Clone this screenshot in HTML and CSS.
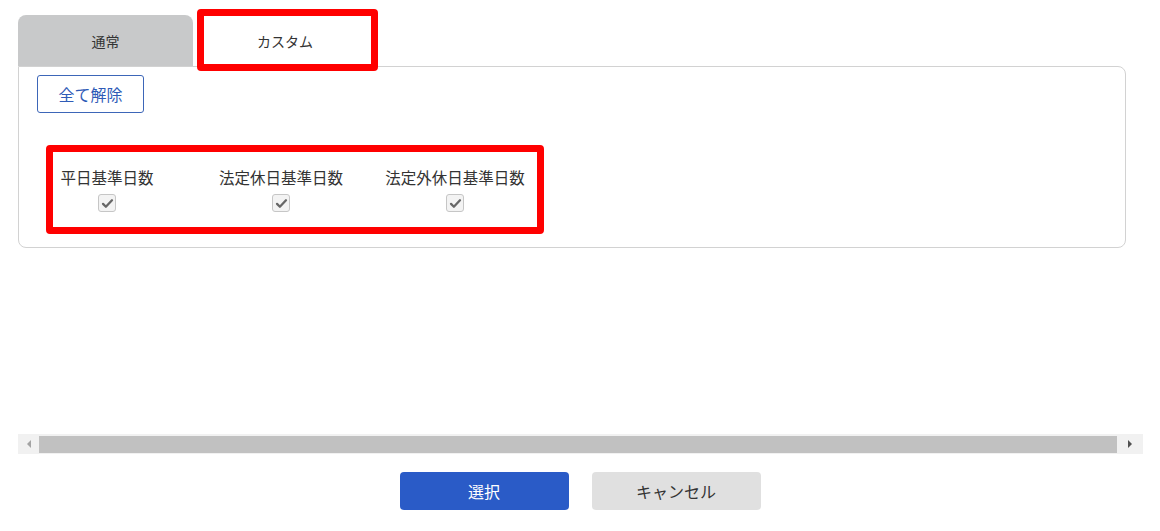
FILE: index.html
```html
<!DOCTYPE html>
<html lang="ja">
<head>
<meta charset="utf-8">
<title>カスタム</title>
<link rel="stylesheet" href="styles.css">
</head>
<body>
<div class="page">
  <div class="tabs">
    <div class="tab tab-normal">通常</div>
    <div class="tab tab-custom">カスタム</div>
    <div class="mark mark-tab"></div>
  </div>
  <div class="panel">
    <button class="btn-clear">全て解除</button>
    <div class="fields">
      <div class="field">
        <span class="label">平日基準日数</span>
        <span class="check"><svg viewBox="0 0 16 16" width="13" height="13"><path d="M2.5 8.5 L6 12 L13.5 4" fill="none" stroke="#676767" stroke-width="2.8" stroke-linecap="round" stroke-linejoin="round"/></svg></span>
      </div>
      <div class="field">
        <span class="label">法定休日基準日数</span>
        <span class="check"><svg viewBox="0 0 16 16" width="13" height="13"><path d="M2.5 8.5 L6 12 L13.5 4" fill="none" stroke="#676767" stroke-width="2.8" stroke-linecap="round" stroke-linejoin="round"/></svg></span>
      </div>
      <div class="field">
        <span class="label">法定外休日基準日数</span>
        <span class="check"><svg viewBox="0 0 16 16" width="13" height="13"><path d="M2.5 8.5 L6 12 L13.5 4" fill="none" stroke="#676767" stroke-width="2.8" stroke-linecap="round" stroke-linejoin="round"/></svg></span>
      </div>
      <div class="mark mark-fields"></div>
    </div>
  </div>
  <div class="hscroll">
    <div class="sb-btn sb-left"><span class="arrow-left"></span></div>
    <div class="sb-thumb"></div>
    <div class="sb-btn sb-right"><span class="arrow-right"></span></div>
  </div>
  <div class="actions">
    <button class="btn btn-primary">選択</button>
    <button class="btn btn-secondary">キャンセル</button>
  </div>
</div>
</body>
</html>
```
FILE: styles.css
```css
* { box-sizing: border-box; }
html, body { margin: 0; padding: 0; background: #fff; }
body {
  font-family: "Noto Sans CJK JP", "Noto Sans", sans-serif;
  color: #333;
  width: 1160px;
  height: 531px;
  overflow: hidden;
}
.page { padding: 15px 0 0 18px; }

.tabs {
  position: relative;
  display: flex;
  height: 51px;
}
.tab {
  height: 51px;
  display: flex;
  align-items: center;
  justify-content: center;
  font-size: 14px;
  color: #333;
  border-radius: 8px 8px 0 0;
}
.tab-normal { width: 175px; background: #c8c9ca; }
.tab-custom { width: 184px; background: #fff; }

.mark {
  position: absolute;
  border: 7px solid #f00;
  border-radius: 4px;
  pointer-events: none;
}
.mark-tab { left: 179px; top: -6px; width: 181px; height: 62px; }

.panel {
  width: 1108px;
  height: 182px;
  border: 1px solid #d2d2d2;
  border-radius: 0 8px 8px 8px;
  padding: 8px 0 0 18px;
}
.btn-clear {
  display: block;
  width: 107px;
  height: 38px;
  background: #fff;
  border: 1px solid #3d66b8;
  border-radius: 3px;
  color: #2f5bb7;
  font-family: inherit;
  font-size: 16px;
  padding: 0;
}
.fields {
  position: relative;
  display: grid;
  grid-template-columns: repeat(3, 174px);
  margin: 53px 0 0 -17px;
}
.field {
  display: flex;
  flex-direction: column;
  align-items: center;
}
.label {
  font-size: 15.5px;
  line-height: 22px;
  color: #333;
}
.check {
  margin-top: 6px;
  width: 18px;
  height: 18px;
  border: 1px solid #c6c6c6;
  border-radius: 3px;
  background: #f3f3f3;
  display: flex;
  align-items: center;
  justify-content: center;
}
.mark-fields { left: 26px; top: -21px; width: 498px; height: 89px; }

.hscroll {
  margin-top: 186px;
  width: 1125px;
  height: 20px;
  background: #f1f1f1;
  display: flex;
  align-items: center;
}
.sb-btn {
  width: 21px;
  height: 20px;
  display: flex;
  align-items: center;
  justify-content: center;
}
.sb-right { width: 26px; }
.sb-thumb { flex: 1; height: 17px; background: #c1c1c1; }
.arrow-left {
  width: 0; height: 0;
  border-top: 4px solid transparent;
  border-bottom: 4px solid transparent;
  border-right: 4px solid #a3a3a3;
}
.arrow-right {
  width: 0; height: 0;
  border-top: 4px solid transparent;
  border-bottom: 4px solid transparent;
  border-left: 4px solid #505050;
}

.actions {
  margin: 18px 0 0 -18px;
  width: 1160px;
  display: flex;
  justify-content: center;
  gap: 23px;
}
.btn {
  width: 169px;
  height: 38px;
  border: none;
  border-radius: 4px;
  font-family: inherit;
  font-size: 16px;
  padding: 0;
}
.btn-primary { background: #2a5bc7; color: #fff; }
.btn-secondary { background: #e0e0e0; color: #333; }
```
